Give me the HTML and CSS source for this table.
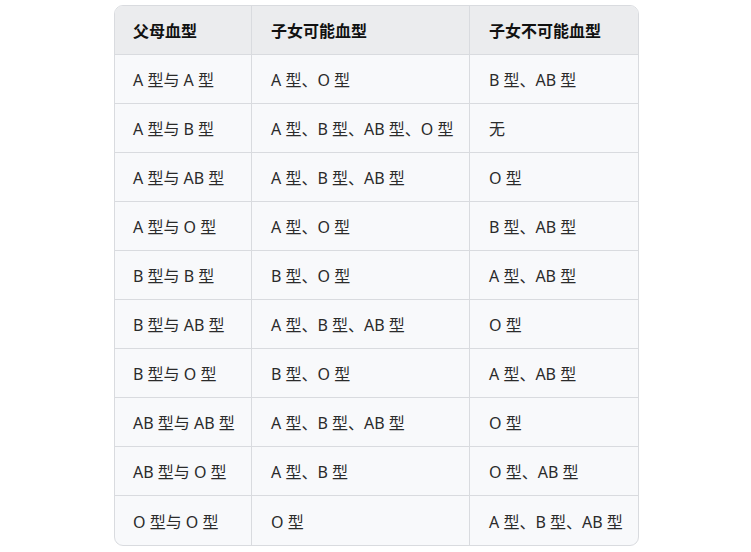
FILE: index.html
```html
<!DOCTYPE html>
<html lang="zh">
<head>
<meta charset="utf-8">
<link rel="stylesheet" href="styles.css">
</head>
<body>
<div class="wrap">
<table class="blood">
<colgroup><col class="c1"><col class="c2"><col class="c3"></colgroup>
<thead>
<tr><th>父母血型</th><th>子女可能血型</th><th>子女不可能血型</th></tr>
</thead>
<tbody>
<tr><td>A 型与 A 型</td><td>A 型、O 型</td><td>B 型、AB 型</td></tr>
<tr><td>A 型与 B 型</td><td>A 型、B 型、AB 型、O 型</td><td>无</td></tr>
<tr><td>A 型与 AB 型</td><td>A 型、B 型、AB 型</td><td>O 型</td></tr>
<tr><td>A 型与 O 型</td><td>A 型、O 型</td><td>B 型、AB 型</td></tr>
<tr><td>B 型与 B 型</td><td>B 型、O 型</td><td>A 型、AB 型</td></tr>
<tr><td>B 型与 AB 型</td><td>A 型、B 型、AB 型</td><td>O 型</td></tr>
<tr><td>B 型与 O 型</td><td>B 型、O 型</td><td>A 型、AB 型</td></tr>
<tr><td>AB 型与 AB 型</td><td>A 型、B 型、AB 型</td><td>O 型</td></tr>
<tr><td>AB 型与 O 型</td><td>A 型、B 型</td><td>O 型、AB 型</td></tr>
<tr><td>O 型与 O 型</td><td>O 型</td><td>A 型、B 型、AB 型</td></tr>
</tbody>
</table>
</div>
</body>
</html>
```
FILE: styles.css
```css
html, body {
  margin: 0;
  padding: 0;
  background: #ffffff;
}
body {
  font-family: "Noto Sans", "Noto Sans CJK SC", sans-serif;
  color: #2b2b2b;
  font-size: 16px;
}
.wrap {
  display: flex;
  justify-content: flex-start;
  padding: 5px 0 0 114px;
}
.blood {
  table-layout: fixed;
  width: 525px;
  border-collapse: separate;
  border-spacing: 0;
  border: 1px solid #d9dbdf;
  border-radius: 9px;
  overflow: hidden;
  background: #f8f9fb;
}
.c1 { width: 137px; }
.c2 { width: 218px; }
.c3 { width: 168px; }
.blood th, .blood td {
  text-align: left;
  height: 49px;
  padding: 0 8px 0 19px;
  box-sizing: border-box;
  border-right: 1px solid #d9dbdf;
  border-bottom: 1px solid #d9dbdf;
  white-space: nowrap;
  overflow: hidden;
}
.blood th:first-child, .blood td:first-child { padding-left: 18px; }
.blood th:last-child, .blood td:last-child { border-right: none; }
.blood tbody tr:last-child td { border-bottom: none; }
.blood th {
  background: #ebecee;
  font-weight: 700;
  color: #111;
}
```
